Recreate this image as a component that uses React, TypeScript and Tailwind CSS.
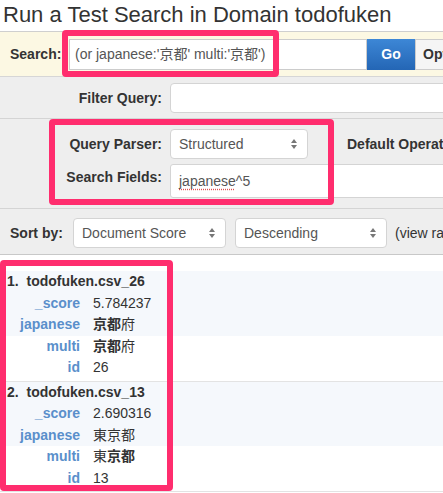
import React from "react";

const font = "font-['Liberation_Sans','Noto_Sans_CJK_JP',Arial,sans-serif]";

const Arrows = () => (
  <svg width="8" height="14" viewBox="0 0 8 14" className="shrink-0">
    <path d="M4 2 L7 6 L1 6 Z" fill="#777" />
    <path d="M4 12 L7 8 L1 8 Z" fill="#777" />
  </svg>
);

const Select = ({ label, className }: { label: string; className: string }) => (
  <div
    className={`flex items-center justify-between bg-white border border-[#d4d4d4] rounded-[4px] pl-[8px] pr-[9px] text-[14px] text-[#555] ${className}`}
  >
    <span>{label}</span>
    <Arrows />
  </div>
);

type Result = {
  n: number;
  id: string;
  score: string;
  japanese: React.ReactNode;
  multi: React.ReactNode;
  docId: string;
};

// highlighted match
const Hl = ({ children }: { children: React.ReactNode }) => (
  <span className="font-bold">{children}</span>
);

const results: Result[] = [
  {
    n: 1,
    id: "todofuken.csv_26",
    score: "5.784237",
    japanese: (
      <>
        <Hl>京都</Hl>府
      </>
    ),
    multi: (
      <>
        <Hl>京都</Hl>府
      </>
    ),
    docId: "26",
  },
  {
    n: 2,
    id: "todofuken.csv_13",
    score: "2.690316",
    japanese: <>東京都</>,
    multi: (
      <>
        東<Hl>京都</Hl>
      </>
    ),
    docId: "13",
  },
];

const Field = ({ name, children }: { name: string; children: React.ReactNode }) => (
  <div className="flex h-[21.5px] items-center">
    <span className="w-[80px] text-right font-bold text-[#5a8fcb]">{name}</span>
    <span className="ml-[13px] text-[#333]">{children}</span>
  </div>
);

export default function App() {
  return (
    <div className={`relative w-[443px] h-[493px] overflow-hidden bg-white ${font}`}>
      <div className="w-[800px]">
        <h1 className="pl-[3px] pt-[1px] text-[22px] leading-[28px] text-[#333]">
          Run a Test Search in Domain todofuken
        </h1>

        {/* search bar */}
        <div className="mt-[2px] flex h-[45px] items-center border-t border-[#cfcfcf] bg-[#fcf8e3]">
          <span className="ml-[10px] w-[59px] text-[14px] font-bold text-[#333]">Search:</span>
          <div className="flex h-[31px] w-[298px] items-center border border-[#ccc] bg-white pl-[5px] text-[14px] text-[#555]">
            (or japanese:'京都' multi:'京都')
          </div>
          <button className="h-[31px] w-[48px] bg-gradient-to-b from-[#3d87d6] to-[#2466b5] text-[14px] font-bold text-white">
            Go
          </button>
          <button className="h-[31px] w-[80px] border border-[#ccc] bg-[#f5f5f5] text-left pl-[7px] text-[14px] font-bold text-[#333]">
            Options
          </button>
        </div>

        {/* options */}
        <div className="border-t border-[#d6d6d6] bg-[#eee] text-[14px] text-[#333]">
          <div className="flex items-center pt-[6px] pb-[5px]">
            <span className="w-[162px] text-right font-bold">Filter Query:</span>
            <div className="ml-[8px] h-[30px] w-[400px] rounded-[4px] border border-[#d4d4d4] bg-white" />
          </div>
          <div className="border-t border-[#d4d4d4]" />
          <div className="flex flex-col gap-[5px] pt-[10px] pb-[10px]">
            <div className="flex items-center">
              <span className="w-[162px] text-right font-bold">Query Parser:</span>
              <Select label="Structured" className="ml-[8px] h-[30px] w-[138px]" />
              <span className="ml-[39px] font-bold">Default Operator:</span>
            </div>
            <div className="flex items-start">
              <span className="w-[162px] pt-[3px] text-right font-bold">Search Fields:</span>
              <div className="ml-[8px] flex h-[34px] w-[400px] items-center rounded-[3px] border border-[#d4d4d4] bg-white pl-[8px] text-[#555]">
                <span className="underline decoration-dotted decoration-[#e05050] underline-offset-[3px]">
                  japanese
                </span>
                ^5
              </div>
            </div>
          </div>
          <div className="border-t border-[#d4d4d4]" />
          <div className="flex items-center pt-[9px] pb-[6px]">
            <span className="ml-[10px] w-[63px] font-bold">Sort by:</span>
            <Select label="Document Score" className="h-[30px] w-[153px]" />
            <Select label="Descending" className="ml-[9px] h-[30px] w-[152px]" />
            <span className="ml-[8px]">(view rank expression)</span>
          </div>
        </div>
        <div className="border-t border-[#c8c8c8]" />

        {/* results */}
        <div className="pt-[16px] text-[14px]">
          {results.map((r) => (
            <div key={r.id} className="border-b border-[#e3e3e3] pb-[2px]">
              <div className="bg-[#f5f8fc]">
                <div className="flex h-[21.5px] items-center pl-[7px] font-bold text-[#333]">
                  {r.n}.&nbsp; {r.id}
                </div>
                <Field name="_score">{r.score}</Field>
                <Field name="japanese">{r.japanese}</Field>
              </div>
              <Field name="multi">{r.multi}</Field>
              <Field name="id">{r.docId}</Field>
            </div>
          ))}
        </div>
      </div>

      {/* annotation boxes */}
      <div className="absolute left-[62px] top-[30px] h-[47px] w-[217px] rounded-[4px] border-[6px] border-[#ff2d6e]" />
      <div className="absolute left-[49px] top-[119px] h-[86px] w-[285px] rounded-[4px] border-[6px] border-[#ff2d6e]" />
      <div className="absolute left-[0px] top-[260px] h-[231px] w-[173px] rounded-[4px] border-[6px] border-[#ff2d6e]" />
    </div>
  );
}
